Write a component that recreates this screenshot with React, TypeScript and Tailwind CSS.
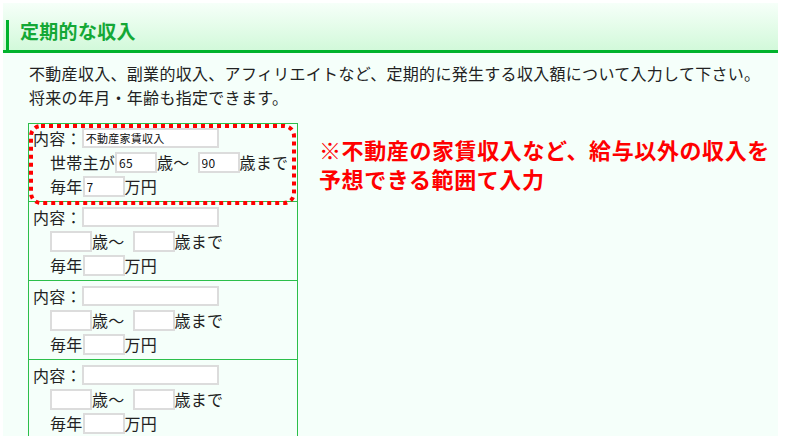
import React from 'react';

const FONT = { fontFamily: '"Noto Sans CJK JP", "Noto Sans", sans-serif' };

interface IncomeRowProps {
  content?: string;
  from?: string;
  to?: string;
  amount?: string;
  householder?: boolean;
  first?: boolean;
}

function Box({ value = '', wide }: { value?: string; wide?: boolean }) {
  return (
    <input
      readOnly
      value={value}
      className={`${wide ? 'w-[137px] h-[20px] text-[11px]' : 'w-[42px] h-[21px] text-[12px]'} border-2 border-[#dcdcdc] bg-white pl-[2px] text-[#111] outline-none`}
      style={{ fontFamily: '"Noto Sans CJK JP", "Liberation Sans", sans-serif' }}
    />
  );
}

function IncomeRow({ content, from, to, amount, householder, first }: IncomeRowProps) {
  return (
    <div className={`${first ? 'pt-[2px]' : 'border-t border-[#2cbf4a] pt-[3px]'} pl-[4px] pb-[3px] text-[16px] tracking-[0.25px] text-[#222]`}>
      <div className="flex h-[24px] items-center">
        <span>内容：</span>
        <Box value={content} wide />
      </div>
      <div className="flex h-[24px] items-center pl-[17px]">
        {householder && <span>世帯主が</span>}
        <Box value={from} />
        <span className="mr-[8px]">歳〜</span>
        <Box value={to} />
        <span>歳まで</span>
      </div>
      <div className="flex h-[24px] items-center pl-[17px]">
        <span>毎年</span>
        <Box value={amount} />
        <span>万円</span>
      </div>
    </div>
  );
}

export default function App() {
  return (
    <div className="h-[436px] w-[785px] overflow-hidden bg-white pl-[3px] pt-[3px]" style={FONT}>
      <div className="h-full w-[775px] bg-[#f5fffa]">
        {/* Section header */}
        <div className="flex h-[50px] items-end border-b-[3px] border-[#00b32c] bg-gradient-to-b from-[#f6fff9] to-[#d2f9da] pl-[3px]">
          <div className="-mb-[3px] h-[33px] w-[3px] shrink-0 bg-[#00b32c]" />
          <h2 className="mb-[5px] ml-[11px] text-[19px] font-bold leading-[28px] tracking-[0.3px] text-[#14a836]">
            定期的な収入
          </h2>
        </div>

        <p className="mt-[8px] pl-[26px] text-[16px] leading-[24px] tracking-[0.3px] text-[#222]">
          不動産収入、副業的収入、アフィリエイトなど、定期的に発生する収入額について入力して下さい。
          <br />
          将来の年月・年齢も指定できます。
        </p>

        <div className="mt-[14px] flex items-start pl-[25px]">
          <div className="relative w-[270px] border border-b-0 border-[#2cbf4a]">
            <IncomeRow first householder content="不動産家賃収入" from="65" to="90" amount="7" />
            <IncomeRow />
            <IncomeRow />
            <IncomeRow />
            {/* red dotted annotation frame */}
            <svg className="pointer-events-none absolute -left-px -top-px" width="270" height="84">
              <rect
                x="3"
                y="3"
                width="263"
                height="77"
                rx="10"
                fill="none"
                stroke="#ff0000"
                strokeWidth="4"
                strokeDasharray="4 4"
              />
            </svg>
          </div>
          <p className="ml-[21px] mt-[12px] text-[22px] font-bold leading-[29px] tracking-[0.6px] text-[#ff0000]">
            ※不動産の家賃収入など、給与以外の収入を
            <br />
            予想できる範囲て入力
          </p>
        </div>
      </div>
    </div>
  );
}
